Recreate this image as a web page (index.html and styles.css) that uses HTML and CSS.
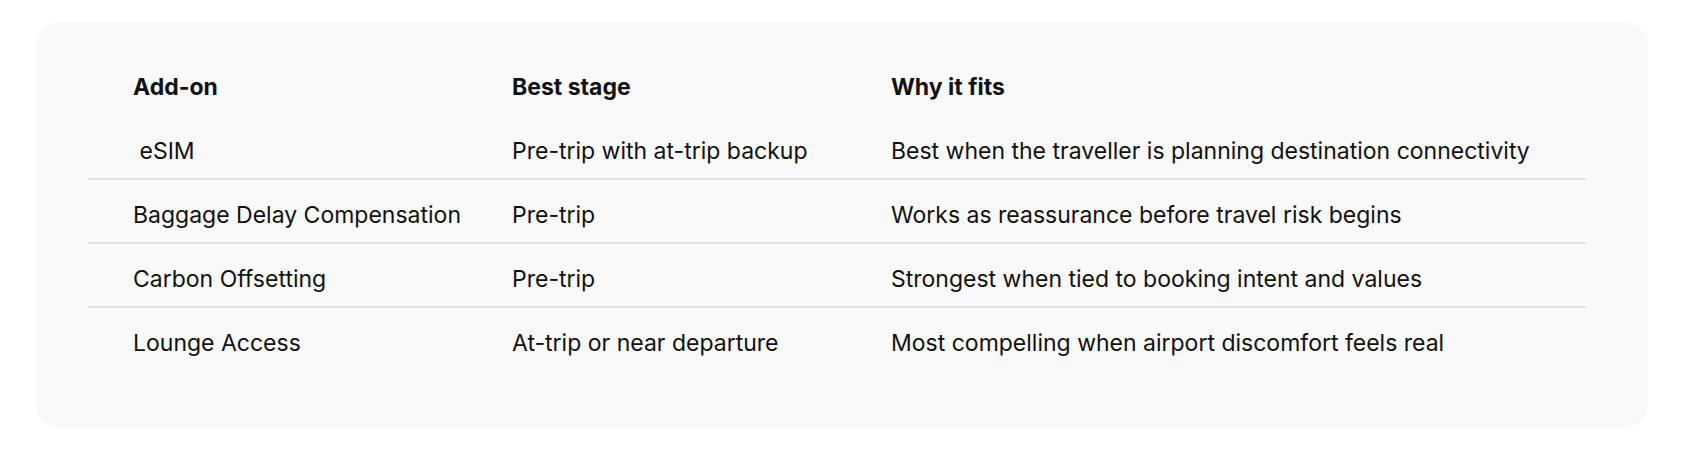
FILE: index.html
```html
<!DOCTYPE html>
<html lang="en">
<head>
<meta charset="utf-8">
<title>Add-on stages</title>
<link rel="stylesheet" href="styles.css">
</head>
<body>
<div class="page">
  <section class="card">
    <div class="table">
      <div class="row head">
        <div class="cell">Add-on</div>
        <div class="cell">Best stage</div>
        <div class="cell">Why it fits</div>
      </div>
      <div class="row line">
        <div class="cell">&nbsp;eSIM</div>
        <div class="cell">Pre-trip with at-trip backup</div>
        <div class="cell">Best when the traveller is planning destination connectivity</div>
      </div>
      <div class="row line">
        <div class="cell">Baggage Delay Compensation</div>
        <div class="cell">Pre-trip</div>
        <div class="cell">Works as reassurance before travel risk begins</div>
      </div>
      <div class="row line">
        <div class="cell">Carbon Offsetting</div>
        <div class="cell">Pre-trip</div>
        <div class="cell">Strongest when tied to booking intent and values</div>
      </div>
      <div class="row">
        <div class="cell">Lounge Access</div>
        <div class="cell">At-trip or near departure</div>
        <div class="cell">Most compelling when airport discomfort feels real</div>
      </div>
    </div>
  </section>
</div>
</body>
</html>
```

FILE: styles.css
```css
* { box-sizing: border-box; }
html, body { margin: 0; padding: 0; background: #ffffff; }
body {
  font-family: "Inter", "Liberation Sans", sans-serif;
  color: #111111;
}
.page {
  padding: 22px 38px 22px 36px;
}
.card {
  background: #f9f9f9;
  border-radius: 24px;
  height: 406px;
  padding: 30px 62px 0 52px;
}
.table {
  display: flex;
  flex-direction: column;
}
.row {
  display: grid;
  grid-template-columns: 379px 379px 1fr;
  height: 64px;
  padding-top: 20px;
  font-size: 23px;
  line-height: 30px;
}
.row.line {
  border-bottom: 2px solid #e2e2e2;
}
.row.head {
  font-weight: 700;
}
.cell {
  padding-left: 45px;
  white-space: nowrap;
}
```
